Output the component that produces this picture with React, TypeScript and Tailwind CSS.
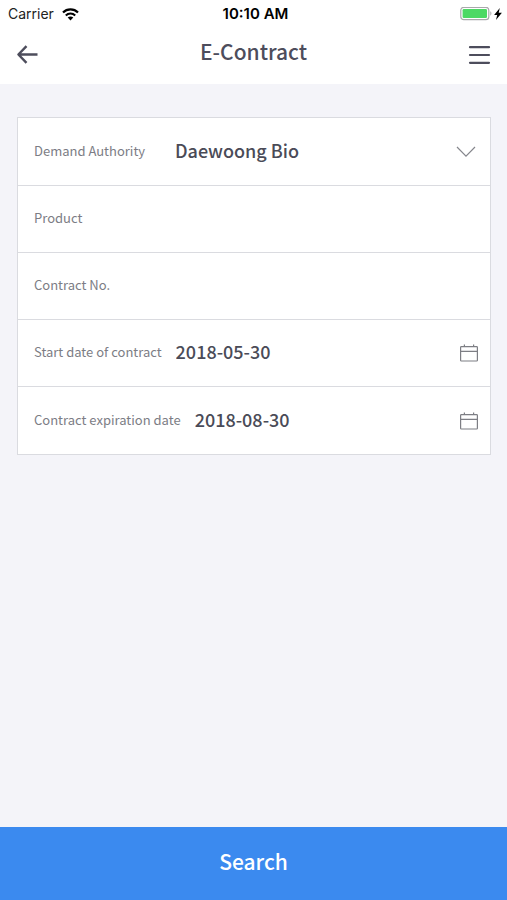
import { useState } from "react";
import type { ReactNode } from "react";

const rowClass = "flex h-[67px] items-center gap-3.5 border-b border-[#dadbe0] px-4 last:border-b-0 first:h-[68px]";
const labelClass = "min-w-[127px] shrink-0 whitespace-nowrap pb-0.5 text-[13px] leading-5 text-[#7c7d85]";
const valueClass = "min-w-0 flex-1 appearance-none bg-transparent pb-1 text-[18px] font-medium leading-6 text-[#4a4b57] outline-none";

function StatusBar() {
  return (
    <div className="grid h-7 grid-cols-3 items-center px-2 font-['Inter',sans-serif] text-[14px] leading-5 text-black">
      <div className="flex items-center gap-2 text-[#222222]">
        <span>Carrier</span>
        <svg width="17" height="13" viewBox="0 0 17 13" fill="none" aria-hidden="true">
          <path d="M1 4.6C5.1 .4 11.9 .4 16 4.6" stroke="#000" strokeWidth="2.2" />
          <path d="M3.8 7.4C6.4 4.8 10.6 4.8 13.2 7.4" stroke="#000" strokeWidth="2.1" />
          <path d="M8.5 12.4 5.7 9.6C7.2 8.1 9.8 8.1 11.3 9.6Z" fill="#000" />
        </svg>
      </div>
      <span className="pl-1 text-center text-[15px] font-semibold">10:10 AM</span>
      <div className="-mr-1 flex items-center justify-end gap-0.5">
        <svg width="32" height="14" viewBox="0 0 32 14" fill="none" aria-hidden="true">
          <rect x=".8" y=".3" width="28" height="12.4" rx="3" stroke="#a9a9ab" strokeWidth="1.2" />
          <rect x="2.6" y="2.1" width="24.4" height="8.8" rx="1.2" fill="#4cd964" />
          <path d="M30.3 4.3C31.8 4.9 31.8 8.1 30.3 8.7Z" fill="#a9a9ab" />
        </svg>
        <svg width="9" height="12" viewBox="0 0 9 12" aria-hidden="true">
          <path d="M5.8 0 .1 7H3.2L2 12 7.9 4.8H4.7Z" fill="#000" />
        </svg>
      </div>
    </div>
  );
}

function Header() {
  return (
    <header className="flex h-14 items-center justify-between px-4 pb-1 text-[#4d4d5c]">
      <button type="button" aria-label="Back" className="flex h-8 w-6 items-center">
        <svg width="24" height="20" viewBox="0 0 24 20" fill="none" stroke="currentColor" strokeWidth="2.4" aria-hidden="true">
          <path d="M2.5 10.5H21.5M10.5 2.1 2.4 10.5 10.5 18.9" strokeLinejoin="round" />
        </svg>
      </button>
      <h1 className="pb-1.5 text-[21px] font-medium leading-7">E-Contract</h1>
      <button type="button" aria-label="Menu" className="flex h-8 w-6 items-center justify-end">
        <svg width="23" height="20" viewBox="0 0 23 20" fill="none" stroke="currentColor" strokeWidth="2.2" strokeLinecap="round" aria-hidden="true">
          <path d="M2 3.2H21M2 11H21M2 18.8H21" />
        </svg>
      </button>
    </header>
  );
}

function CalendarIcon() {
  return (
    <svg width="18" height="18" viewBox="0 0 18 18" fill="none" stroke="#7d7e84" aria-hidden="true">
      <rect x=".6" y="2.6" width="16.8" height="14.4" rx=".8" strokeWidth="1.2" />
      <path d="M.6 7.3H17.4M4.4 .6V2.6M13.6 .6V2.6" strokeWidth="1.2" />
    </svg>
  );
}

type FieldProps = {
  id: string;
  label: string;
  defaultValue?: string;
  icon?: ReactNode;
};

function Field({ id, label, defaultValue = "", icon }: FieldProps) {
  const [value, setValue] = useState(defaultValue);

  return (
    <div className={rowClass}>
      <label htmlFor={id} className={labelClass}>{label}</label>
      <input id={id} type="text" value={value} onChange={(e) => setValue(e.target.value)} className={valueClass} />
      {icon && (
        <button type="button" aria-label={`Pick ${label}`} className="-mr-1 shrink-0">
          {icon}
        </button>
      )}
    </div>
  );
}

export default function App() {
  return (
    <div className="flex min-h-screen flex-col bg-[#f4f4f9] font-['Noto_Sans_CJK_KR',sans-serif]">
      <div className="bg-white">
        <StatusBar />
        <Header />
      </div>

      <form id="search-form" onSubmit={(e) => e.preventDefault()} className="flex flex-1 flex-col">
        <div className="flex-1 py-[33px] pl-[17px] pr-4">
          <div className="border border-[#dadbe0] bg-white">
            <div className={rowClass}>
              <label htmlFor="authority" className={labelClass}>Demand Authority</label>
              <select id="authority" className={valueClass}>
                <option>Daewoong Bio</option>
              </select>
              <svg width="20" height="12" viewBox="0 0 20 12" fill="none" stroke="#85868c" strokeWidth="1.2" className="-mr-0.5 shrink-0" aria-hidden="true">
                <path d="M1 1 10 10.2 19 1" />
              </svg>
            </div>
            <Field id="product" label="Product" />
            <Field id="contract-no" label="Contract No." />
            <Field id="start-date" label="Start date of contract" defaultValue="2018-05-30" icon={<CalendarIcon />} />
            <Field id="end-date" label="Contract expiration date" defaultValue="2018-08-30" icon={<CalendarIcon />} />
          </div>
        </div>

        <button type="submit" className="h-[73px] w-full bg-[#3b8aef] pb-1.5 text-[21px] font-medium leading-7 text-white">
          Search
        </button>
      </form>
    </div>
  );
}
